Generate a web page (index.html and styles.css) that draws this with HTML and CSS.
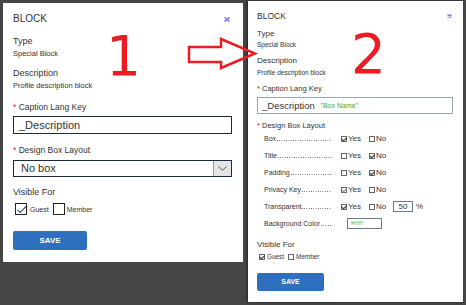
FILE: index.html
```html
<!DOCTYPE html>
<html>
<head>
    <title>Block settings</title>
    <link rel="stylesheet" href="styles.css">
</head>
<body>
    <div class="stage">
        <div class="panel p1">
            <div class="head">
                <span class="title">BLOCK</span>
                <span class="close"><svg width="6" height="5" viewBox="0 0 6 5"><path d="M0.5 0.5 L5.5 4.5 M5.5 0.5 L0.5 4.5" stroke="#7d6ff0" stroke-width="1.6"/></svg></span>
            </div>
            <div class="label type">Type</div>
            <div class="value">Special Block</div>
            <div class="label desc">Description</div>
            <div class="value">Profile description block</div>
            <div class="label caption"><span class="star">*</span> Caption Lang Key</div>
            <div class="field">_Description</div>
            <div class="label layout"><span class="star">*</span> Design Box Layout</div>
            <div class="select">
                <span class="select-text">No box</span>
                <span class="select-btn"><svg width="9" height="5" viewBox="0 0 9 5"><path d="M0.5 0.5 L4.5 4.3 L8.5 0.5" fill="none" stroke="#555" stroke-width="1"/></svg></span>
            </div>
            <div class="label visible">Visible For</div>
            <div class="checks">
                <i class="cb on"></i><span class="cb-text">Guest</span>
                <i class="cb"></i><span class="cb-text">Member</span>
            </div>
            <button class="save">SAVE</button>
        </div>

        <div class="panel p2">
            <div class="head">
                <span class="title">BLOCK</span>
                <span class="close"><svg width="5" height="4" viewBox="0 0 5 4"><path d="M0.5 0.5 L4.5 3.5 M4.5 0.5 L0.5 3.5" stroke="#7d6ff0" stroke-width="1.4"/></svg></span>
            </div>
            <div class="label type">Type</div>
            <div class="value">Special Block</div>
            <div class="label desc">Description</div>
            <div class="value">Profile description block</div>
            <div class="label caption"><span class="star">*</span> Caption Lang Key</div>
            <div class="field">_Description <span class="hint">"Box Name"</span></div>
            <div class="label layout"><span class="star">*</span> Design Box Layout</div>
            <div class="rows">
                <div class="row">
                    <span class="row-name">Box<span class="leader"></span></span>
                    <span class="opt"><i class="cb on"></i>Yes</span>
                    <span class="opt"><i class="cb"></i>No</span>
                </div>
                <div class="row">
                    <span class="row-name">Title<span class="leader"></span></span>
                    <span class="opt"><i class="cb"></i>Yes</span>
                    <span class="opt"><i class="cb on"></i>No</span>
                </div>
                <div class="row">
                    <span class="row-name">Padding<span class="leader"></span></span>
                    <span class="opt"><i class="cb"></i>Yes</span>
                    <span class="opt"><i class="cb on"></i>No</span>
                </div>
                <div class="row">
                    <span class="row-name">Privacy Key<span class="leader"></span></span>
                    <span class="opt"><i class="cb on light"></i>Yes</span>
                    <span class="opt"><i class="cb"></i>No</span>
                </div>
                <div class="row">
                    <span class="row-name">Transparent<span class="leader"></span></span>
                    <span class="opt"><i class="cb on"></i>Yes</span>
                    <span class="opt"><i class="cb"></i>No</span>
                    <span class="num">50</span><span class="pct">%</span>
                </div>
                <div class="row">
                    <span class="row-name">Background Color<span class="leader"></span></span>
                    <span class="color-box">#ffffff</span>
                </div>
            </div>
            <div class="label visible">Visible For</div>
            <div class="checks">
                <i class="cb on"></i><span class="cb-text">Guest</span>
                <i class="cb"></i><span class="cb-text">Member</span>
            </div>
            <button class="save">SAVE</button>
        </div>

        <!-- annotations drawn over the two screenshots -->
        <div class="mark mark-1">1</div>
        <div class="mark mark-2">2</div>
        <svg class="arrow" width="72" height="38" viewBox="0 0 72 38">
            <polygon points="2,11 34,11 34,3 68,17.5 34,32 34,26 2,26" fill="none" stroke="#ed1c24" stroke-width="2.5"/>
        </svg>
    </div>
</body>
</html>
```

FILE: styles.css
```css
body {
    margin: 0;
    background-color: #454545;
    font-family: "Liberation Sans", Arial, sans-serif;
    color: #333;
}

.stage {
    position: relative;
    display: flex;
    align-items: flex-start;
    width: 466px;
    height: 305px;
    overflow: hidden;
}

.panel {
    background-color: #fff;
    box-sizing: border-box;
}

.head {
    display: flex;
    justify-content: space-between;
    align-items: center;
}

.close svg {
    display: block;
}

.label, .value {
    white-space: nowrap;
}

.star {
    color: #e02020;
}

.checks {
    display: flex;
    align-items: center;
}

.cb {
    position: relative;
    display: inline-block;
    box-sizing: border-box;
    background-color: #fff;
}

.cb.on::after {
    content: "";
    position: absolute;
    border: solid #333;
    border-width: 0 1px 1px 0;
    transform: rotate(45deg);
}

.save {
    display: block;
    border: none;
    border-radius: 2px;
    background-color: #2e70be;
    color: #fff;
    font-family: "Liberation Sans", Arial, sans-serif;
    font-weight: bold;
    padding: 0;
}

/* left panel */
.p1 {
    width: 240px;
    height: 259px;
    margin: 3px 0 0 3px;
    padding: 10px 11px 0 10px;
}

.p1 .head {
    height: 12px;
    font-size: 10px;
    line-height: 12px;
}

.p1 .close {
    margin-right: 2px;
}

.p1 .label {
    font-size: 9px;
    line-height: 11px;
}

.p1 .value {
    font-size: 7.5px;
    line-height: 10px;
    margin-top: 2px;
}

.p1 .type { margin-top: 11px; }
.p1 .desc { margin-top: 9px; }
.p1 .caption { margin-top: 10.5px; font-size: 8.5px; }
.p1 .layout { margin-top: 10.5px; font-size: 8.5px; }
.p1 .visible { margin-top: 10.4px; }

.p1 .field {
    margin-top: 3.5px;
    height: 18px;
    box-sizing: border-box;
    border: 1px solid #1c2b3f;
    font-size: 11px;
    line-height: 16px;
    padding-left: 5px;
}

.p1 .select {
    display: flex;
    margin-top: 4.5px;
    height: 17px;
    box-sizing: border-box;
    border: 1px solid #1c2b3f;
}

.p1 .select-text {
    flex: 1;
    font-size: 11px;
    line-height: 15px;
    padding-left: 7px;
}

.p1 .select-btn {
    width: 17px;
    background-color: #e4e4e4;
    border-left: 1px solid #9a9a9a;
    display: flex;
    align-items: center;
    justify-content: center;
}

.p1 .checks {
    margin-top: 4.6px;
    height: 13px;
    padding-left: 2px;
}

.p1 .cb {
    width: 12px;
    height: 12px;
    border: 1px solid #222;
}

.p1 .cb.on::after {
    left: 3.5px;
    top: 0;
    width: 3px;
    height: 8px;
}

.p1 .cb-text {
    font-size: 7px;
    margin: 0 4px 0 3px;
}

.p1 .cb-text:last-child {
    margin-left: 2px;
}

.p1 .save {
    margin-top: 15px;
    width: 74px;
    height: 19px;
    font-size: 8px;
}

/* right panel */
.p2 {
    width: 215px;
    height: 301px;
    margin: 1px 0 0 5px;
    padding: 9.5px 10px 0 9px;
    box-shadow: -1px 0 2px #222;
}

.p2 .head {
    height: 10px;
    font-size: 8.5px;
    line-height: 10px;
}

.p2 .close {
    margin-right: 1px;
}

.p2 .label {
    font-size: 8px;
    line-height: 10px;
}

.p2 .value {
    font-size: 6.5px;
    line-height: 8px;
}

.p2 .type { margin-top: 8.7px; }
.p2 .type + .value { margin-top: 1.5px; }
.p2 .desc { margin-top: 7.5px; }
.p2 .desc + .value { margin-top: 2.5px; }
.p2 .caption { margin-top: 7.6px; font-size: 7.5px; }
.p2 .layout { margin-top: 8.4px; font-size: 7.5px; line-height: 8px; }
.p2 .visible { margin-top: 7.8px; }

.p2 .field {
    margin-top: 2.6px;
    height: 17px;
    box-sizing: border-box;
    border: 1px solid #9aa6b4;
    font-size: 9.5px;
    line-height: 16px;
    padding-left: 4px;
    white-space: nowrap;
}

.p2 .hint {
    color: #2fb14a;
    font-size: 7px;
    margin-left: 3px;
    vertical-align: 1px;
}

.rows {
    padding-left: 7px;
}

.row {
    display: flex;
    align-items: center;
    height: 17px;
    font-size: 7px;
}

.row-name {
    display: flex;
    align-items: baseline;
    width: 68px;
    margin-right: 9px;
    white-space: nowrap;
}

.leader {
    flex: 1;
    height: 1px;
    margin-left: 1px;
    background-image: linear-gradient(to right, #555 1px, transparent 1px);
    background-size: 2.3px 1px;
    background-repeat: repeat-x;
}

.opt {
    display: flex;
    align-items: center;
    width: 28px;
    font-size: 8px;
}

.opt + .opt {
    width: 24px;
}

.p2 .cb {
    width: 6px;
    height: 6px;
    border: 1px solid #666;
    margin-right: 1px;
}

.p2 .cb.on::after {
    left: 1.3px;
    top: -0.5px;
    width: 1.5px;
    height: 3.5px;
}

.p2 .cb.light::after {
    border-color: #888;
}

.num {
    width: 20px;
    height: 11px;
    box-sizing: border-box;
    border: 1px solid #6b7a8a;
    font-size: 8px;
    line-height: 9px;
    text-align: center;
}

.pct {
    margin-left: 3px;
    font-size: 8px;
}

.color-box {
    margin-left: 6px;
    width: 35px;
    height: 11px;
    box-sizing: border-box;
    border: 1px solid #6b7a8a;
    color: #5bc86a;
    font-size: 5.5px;
    line-height: 9px;
    padding-left: 3px;
}

.p2 .checks {
    margin-top: 2.8px;
    height: 8px;
    padding-left: 2px;
}

.p2 .cb-text {
    font-size: 6.4px;
    margin: 0 4px 0 1px;
}

.p2 .save {
    margin-top: 12px;
    width: 67px;
    height: 18px;
    font-size: 7px;
}

/* red annotations */
.mark {
    position: absolute;
    font-family: "DejaVu Sans", sans-serif;
    font-size: 55px;
    line-height: 55px;
    color: #ed1c24;
}

.mark-1 {
    left: 106px;
    top: 28.5px;
}

.mark-2 {
    left: 351px;
    top: 27px;
}

.arrow {
    position: absolute;
    left: 187px;
    top: 36px;
}
```
